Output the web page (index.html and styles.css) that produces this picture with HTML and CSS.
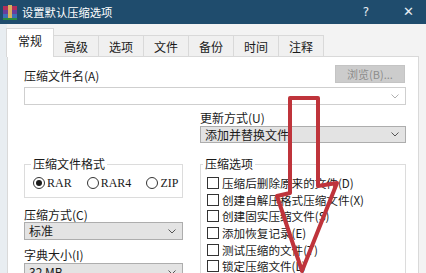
FILE: index.html
```html
<!DOCTYPE html>
<html lang="zh-CN">
<head>
<meta charset="utf-8">
<title>设置默认压缩选项</title>
<link rel="stylesheet" href="styles.css">
</head>
<body>
<div class="win">
  <header class="titlebar">
    <svg class="appicon" width="14" height="15" viewBox="0 0 14 15">
      <rect x="0" y="1" width="14" height="4" fill="#b0305a"/>
      <rect x="0" y="5" width="14" height="4" fill="#6a3d9a"/>
      <rect x="0" y="9" width="14" height="4" fill="#3d6fb8"/>
      <rect x="5" y="0" width="4" height="15" fill="#d8b060"/>
      <rect x="0" y="13" width="14" height="2" fill="#2b8a3e"/>
    </svg>
    <span class="title">设置默认压缩选项</span>
    <span class="tb-btn help">?</span>
    <span class="tb-btn close">✕</span>
  </header>

  <nav class="tabs">
    <div class="tab active">常规</div>
    <div class="tab">高级</div>
    <div class="tab">选项</div>
    <div class="tab">文件</div>
    <div class="tab">备份</div>
    <div class="tab">时间</div>
    <div class="tab">注释</div>
  </nav>

  <main class="panel">
    <div class="row-name">
      <span class="lbl">压缩文件名(A)</span>
      <span class="browse">浏览(B)...</span>
    </div>
    <div class="combo white">
      <span class="val"></span>
      <svg class="chev light" width="8" height="5" viewBox="0 0 8 5"><path d="M0.5 0.5 L4 4 L7.5 0.5" fill="none" stroke="currentColor" stroke-width="1"/></svg>
    </div>

    <div class="cols">
      <div class="col-left">
        <fieldset class="group fmt">
          <legend>压缩文件格式</legend>
          <div class="radios">
            <span class="radio checked"><span class="dot"></span><span class="rtext">RAR</span></span>
            <span class="radio"><span class="dot"></span><span class="rtext">RAR4</span></span>
            <span class="radio"><span class="dot"></span><span class="rtext">ZIP</span></span>
          </div>
        </fieldset>
        <div class="lbl mt-method">压缩方式(C)</div>
        <div class="combo gray">
          <span class="val">标准</span>
          <svg class="chev" width="8" height="5" viewBox="0 0 8 5"><path d="M0.5 0.5 L4 4 L7.5 0.5" fill="none" stroke="currentColor" stroke-width="1"/></svg>
        </div>
        <div class="lbl mt-dict">字典大小(I)</div>
        <div class="combo gray dict">
          <span class="val">32 MB</span>
          <svg class="chev" width="8" height="5" viewBox="0 0 8 5"><path d="M0.5 0.5 L4 4 L7.5 0.5" fill="none" stroke="currentColor" stroke-width="1"/></svg>
        </div>
      </div>

      <div class="col-right">
        <div class="lbl mt-update">更新方式(U)</div>
        <div class="combo gray">
          <span class="val">添加并替换文件</span>
          <svg class="chev" width="8" height="5" viewBox="0 0 8 5"><path d="M0.5 0.5 L4 4 L7.5 0.5" fill="none" stroke="currentColor" stroke-width="1"/></svg>
        </div>
        <fieldset class="group opts">
          <legend>压缩选项</legend>
          <div class="check"><span class="box"></span>压缩后删除原来的文件(D)</div>
          <div class="check"><span class="box"></span>创建自解压格式压缩文件(X)</div>
          <div class="check"><span class="box"></span>创建固实压缩文件(S)</div>
          <div class="check"><span class="box"></span>添加恢复记录(E)</div>
          <div class="check"><span class="box"></span>测试压缩的文件(T)</div>
          <div class="check"><span class="box"></span>锁定压缩文件(L)</div>
        </fieldset>
      </div>
    </div>
  </main>

  <svg class="arrow" width="426" height="273" viewBox="0 0 426 273">
    <polygon points="290,98 318,98 318,186 337,183 302,271 277,196 290,193" fill="none" stroke="#bf343b" stroke-width="4" stroke-linejoin="round"/>
  </svg>
</div>
</body>
</html>
```

FILE: styles.css
```css
* { box-sizing: border-box; }

html, body {
  margin: 0;
  padding: 0;
}

body {
  width: 426px;
  height: 273px;
  overflow: hidden;
  background: #f0f0f0;
  font-family: "Noto Sans CJK SC", "Noto Sans", sans-serif;
  font-size: 12px;
  line-height: 14px;
  color: #1a1a1a;
}

.win {
  position: relative;
  width: 426px;
  height: 273px;
  background: linear-gradient(to right, #e8edf1 0, #e8edf1 7px, #f3f3f3 7px);
}

/* title bar */
.titlebar {
  height: 24px;
  background: #1f4c6d;
  color: #ffffff;
  display: flex;
  align-items: center;
  padding-left: 3px;
}

.appicon {
  flex: none;
  margin-right: 5px;
}

.title {
  font-size: 11.3px;
  letter-spacing: 0;
  flex: 1;
}

.tb-btn {
  color: #e8eef3;
  font-family: "DejaVu Sans", sans-serif;
}

.help {
  font-size: 12px;
  margin-right: 34px;
}

.close {
  font-size: 13px;
  margin-right: 12px;
}

/* tabs */
.tabs {
  height: 32px;
  display: flex;
  align-items: flex-end;
  padding-left: 6px;
}

.tab {
  height: 21px;
  width: 46px;
  margin-left: -1px;
  border: 1px solid #d9d9d9;
  border-bottom: none;
  background: #f0f0f0;
  display: flex;
  align-items: center;
  justify-content: center;
  padding-top: 1px;
}

.tab.active {
  height: 29px;
  width: 48px;
  margin-left: 0;
  margin-right: 0;
  background: #ffffff;
  position: relative;
  z-index: 1;
  padding-top: 0;
  margin-bottom: -1px;
  padding-bottom: 5px;
}

/* panel */
.panel {
  margin: 0 7px;
  height: 230px;
  background: #ffffff;
  border: 1px solid #d9d9d9;
  padding: 8px 12px 0 16px;
}

.row-name {
  height: 18px;
  display: flex;
  align-items: flex-end;
  justify-content: space-between;
}

.browse {
  width: 70px;
  height: 18px;
  background: #cccccc;
  border: 1px solid #c4c4c4;
  color: #8d8d8d;
  font-size: 11px;
  display: flex;
  align-items: center;
  justify-content: center;
  margin-right: 1px;
}

.combo {
  height: 18px;
  display: flex;
  align-items: center;
  justify-content: space-between;
  padding: 0 6px 0 4px;
  border: 1px solid #adadad;
}

.combo.white {
  margin-top: 4px;
  border-color: #cfcfcf;
  background: #ffffff;
}

.combo.gray {
  background: #e3e3e3;
}

.chev {
  color: #555555;
  flex: none;
}

.chev.light {
  color: #b0b0b0;
}

.cols {
  display: grid;
  grid-template-columns: 159px 206px;
  column-gap: 17px;
}

.group {
  margin: 0;
  border: 1px solid #dcdcdc;
  min-width: 0;
}

.group legend {
  padding: 0 2px;
  line-height: 14px;
}

.fmt {
  margin-top: 52px;
  padding: 5px 0 7px 8px;
}

.fmt legend {
  margin-left: -2px;
}

.radios {
  display: flex;
  gap: 15px;
  height: 14px;
  align-items: center;
}

.radio {
  display: flex;
  align-items: center;
}

.dot {
  width: 12px;
  height: 12px;
  border: 1px solid #333333;
  border-radius: 50%;
  background: #ffffff;
  display: flex;
  align-items: center;
  justify-content: center;
  margin-right: 2px;
}

.radio.checked .dot::after {
  content: "";
  width: 6px;
  height: 6px;
  border-radius: 50%;
  background: #1a1a1a;
}

.rtext {
  font-family: "Liberation Serif", serif;
  font-size: 12px;
}

.mt-method { margin-top: 10px; }
.mt-dict { margin-top: 8px; }
.mt-update { margin-top: 6px; }

.col-right .combo.gray {
  margin-top: 1px;
  height: 17px;
}

.combo.dict { margin-top: 1px; }

.opts {
  margin-top: 14px;
  padding: 4px 0 10px 6px;
}

.opts legend {
  margin-left: -4px;
}

.check {
  height: 16.6px;
  display: flex;
  align-items: center;
  white-space: nowrap;
  font-size: 11.6px;
}

.box {
  width: 12px;
  height: 12px;
  border: 1px solid #333333;
  background: #ffffff;
  margin-right: 3px;
  flex: none;
}

.arrow {
  position: absolute;
  left: 0;
  top: 0;
  pointer-events: none;
}
```
